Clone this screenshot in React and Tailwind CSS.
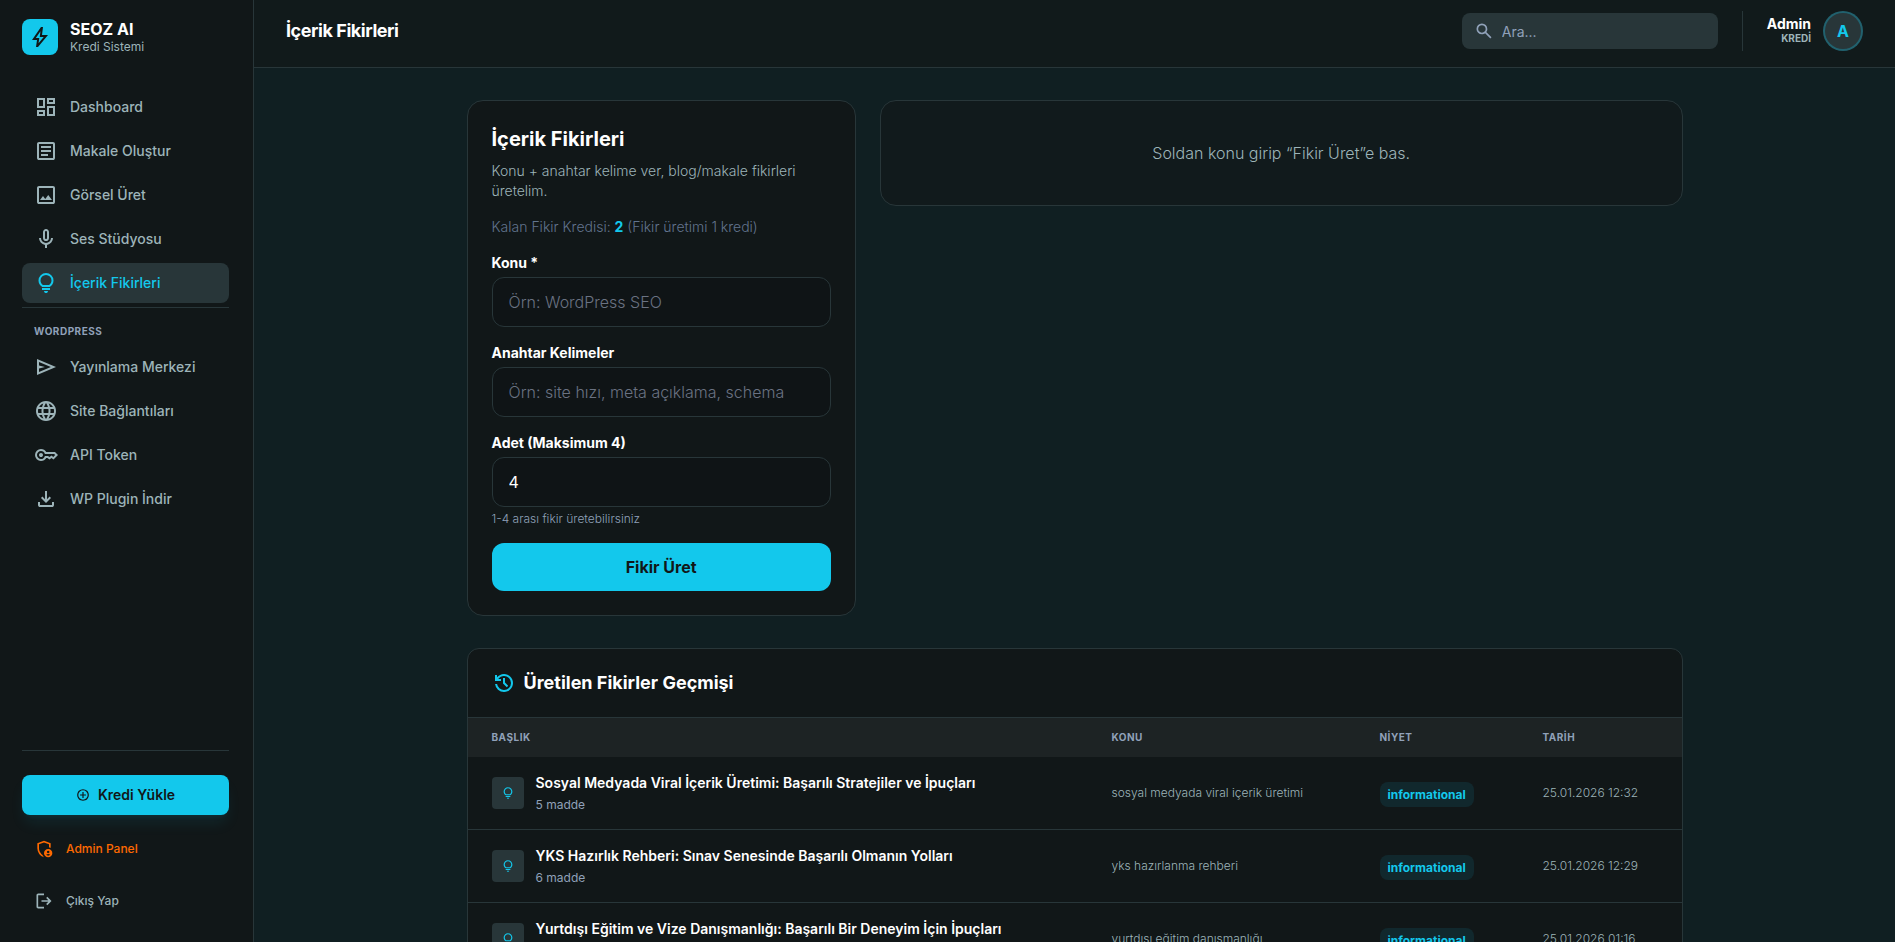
const icons = {
  bolt: "m422-232 207-248H469l29-227-185 267h139l-30 208ZM320-80l40-280H160l360-520h80l-40 320h240L400-80h-80Zm151-390Z",
  dashboard: "M520-600v-240h320v240H520ZM120-440v-400h320v400H120Zm400 320v-400h320v400H520Zm-400 0v-240h320v240H120Zm80-400h160v-240H200v240Zm400 320h160v-240H600v240Zm0-480h160v-80H600v80ZM200-200h160v-80H200v80Z",
  article: "M280-280h280v-80H280v80Zm0-160h400v-80H280v80Zm0-160h400v-80H280v80Zm-80 480q-33 0-56.5-23.5T120-200v-560q0-33 23.5-56.5T200-840h560q33 0 56.5 23.5T840-760v560q0 33-23.5 56.5T760-120H200Zm0-80h560v-560H200v560Z",
  image: "M200-120q-33 0-56.5-23.5T120-200v-560q0-33 23.5-56.5T200-840h560q33 0 56.5 23.5T840-760v560q0 33-23.5 56.5T760-120H200Zm0-80h560v-560H200v560Zm40-80h480L570-480 450-320l-90-120-120 160Z",
  mic: "M480-400q-50 0-85-35t-35-85v-240q0-50 35-85t85-35q50 0 85 35t35 85v240q0 50-35 85t-85 35Zm0-240Zm-40 520v-123q-104-14-172-93t-68-184h80q0 83 58.5 141.5T480-320q83 0 141.5-58.5T680-520h80q0 105-68 184t-172 93v123h-80Zm40-360q17 0 28.5-11.5T520-520v-240q0-17-11.5-28.5T480-800q-17 0-28.5 11.5T440-760v240q0 17 11.5 28.5T480-480Z",
  lightbulb: "M480-80q-33 0-56.5-23.5T400-160h160q0 33-23.5 56.5T480-80ZM320-200v-80h320v80H320Zm10-120q-69-41-109.5-110T180-580q0-125 87.5-212.5T480-880q125 0 212.5 87.5T780-580q0 81-40.5 150T630-320H330Zm24-80h252q45-32 69.5-79T700-580q0-92-64-156t-156-64q-92 0-156 64t-64 156q0 54 24.5 101t69.5 79Zm126 0Z",
  send: "M120-160v-640l760 320-760 320Zm80-120 474-200-474-200v140l240 60-240 60v140Zm0 0v-400 400Z",
  language: "M480-80q-82 0-155-31.5t-127.5-86Q143-252 111.5-325T80-480q0-83 31.5-155.5t86-127Q252-817 325-848.5T480-880q83 0 155.5 31.5t127 86q54.5 54.5 86 127T880-480q0 82-31.5 155t-86 127.5q-54.5 54.5-127 86T480-80Zm0-82q26-36 45-75t31-83H404q12 44 31 83t45 75Zm-104-16q-18-33-31.5-68.5T322-320H204q29 50 72.5 87t99.5 55Zm208 0q56-18 99.5-55t72.5-87H638q-9 38-22.5 73.5T584-178ZM170-400h136q-3-20-4.5-39.5T300-480q0-21 1.5-40.5T306-560H170q-5 20-7.5 39.5T160-480q0 21 2.5 40.5T170-400Zm216 0h188q3-20 4.5-39.5T580-480q0-21-1.5-40.5T574-560H386q-3 20-4.5 39.5T380-480q0 21 1.5 40.5T386-400Zm268 0h136q5-20 7.5-39.5T800-480q0-21-2.5-40.5T790-560H654q3 20 4.5 39.5T660-480q0 21-1.5 40.5T654-400Zm-16-240h118q-29-50-72.5-87T584-782q18 33 31.5 68.5T638-640Zm-234 0h152q-12-44-31-83t-45-75q-26 36-45 75t-31 83Zm-200 0h118q9-38 22.5-73.5T376-782q-56 18-99.5 55T204-640Z",
  key: "M280-400q-33 0-56.5-23.5T200-480q0-33 23.5-56.5T280-560q33 0 56.5 23.5T360-480q0 33-23.5 56.5T280-400Zm0 160q-100 0-170-70T40-480q0-100 70-170t170-70q67 0 121.5 33t86.5 87h352l120 120-180 180-80-60-80 60-85-60h-47q-32 54-86.5 87T280-240Zm0-80q56 0 98.5-34t56.5-86h125l58 41 82-61 71 55 75-75-40-40H435q-14-52-56.5-86T280-640q-66 0-113 47t-47 113q0 66 47 113t113 47Z",
  download: "M480-320 280-520l56-58 104 104v-326h80v326l104-104 56 58-200 200ZM240-160q-33 0-56.5-23.5T160-240v-120h80v120h480v-120h80v120q0 33-23.5 56.5T720-160H240Z",
  addCircle: "M440-280h80v-160h160v-80H520v-160h-80v160H280v80h160v160Zm40 200q-83 0-156-31.5T197-197q-54-54-85.5-127T80-480q0-83 31.5-156T197-763q54-54 127-85.5T480-880q83 0 156 31.5T763-763q54 54 85.5 127T880-480q0 83-31.5 156T763-197q-54 54-127 85.5T480-80Zm0-80q134 0 227-93t93-227q0-134-93-227t-227-93q-134 0-227 93t-93 227q0 134 93 227t227 93Z",
  adminPanel: "M680-280q25 0 42.5-17.5T740-340q0-25-17.5-42.5T680-400q-25 0-42.5 17.5T620-340q0 25 17.5 42.5T680-280Zm0 120q31 0 57-14.5t42-38.5q-22-13-47-20t-52-7q-27 0-52 7t-47 20q16 24 42 38.5t57 14.5ZM480-80q-139-35-229.5-159.5T160-516v-244l320-120 320 120v227q-19-8-39-14.5t-41-9.5v-147l-240-90-240 90v188q0 47 12.5 94t35 89.5Q310-290 342-254t71 60q11 32 29 61t41 52q-1 0-1.5.5t-1.5.5Zm200 0q-83 0-141.5-58.5T480-280q0-83 58.5-141.5T680-480q83 0 141.5 58.5T880-280q0 83-58.5 141.5T680-80ZM480-494Z",
  logout: "M200-120q-33 0-56.5-23.5T120-200v-560q0-33 23.5-56.5T200-840h280v80H200v560h280v80H200Zm440-160-55-58 102-102H360v-80h327L585-622l55-58 200 200-200 200Z",
  search: "M784-120 532-372q-30 24-69 38t-83 14q-109 0-184.5-75.5T120-580q0-109 75.5-184.5T380-840q109 0 184.5 75.5T640-580q0 44-14 83t-38 69l252 252-56 56ZM380-400q75 0 127.5-52.5T560-580q0-75-52.5-127.5T380-760q-75 0-127.5 52.5T200-580q0 75 52.5 127.5T380-400Z",
  history: "M480-120q-138 0-240.5-91.5T122-440h82q14 104 92.5 172T480-200q117 0 198.5-81.5T760-480q0-117-81.5-198.5T480-760q-69 0-129 32t-101 88h110v80H120v-240h80v94q51-64 124.5-99T480-840q75 0 140.5 28.5t114 77q48.5 48.5 77 114T840-480q0 75-28.5 140.5t-77 114q-48.5 48.5-114 77T480-120Zm112-192L440-464v-216h80v184l128 128-56 56Z",
};

function Icon({ name, className }) {
  return (
    <svg viewBox="0 -960 960 960" fill="currentColor" aria-hidden="true" className={`shrink-0 ${className}`}>
      <path d={icons[name]} />
    </svg>
  );
}

function NavItem({ icon, label, active }) {
  return (
    <a
      href="#"
      className={`flex h-10 items-center gap-3 rounded-lg px-3 text-sm font-medium ${
        active ? "bg-[#283639] text-[#13c8ec]" : "text-[#9db4b9] hover:bg-[#283639]"
      }`}
    >
      <Icon name={icon} className="size-6" />
      {label}
    </a>
  );
}

function Sidebar() {
  const mainLinks = [
    { icon: "dashboard", label: "Dashboard" },
    { icon: "article", label: "Makale Oluştur" },
    { icon: "image", label: "Görsel Üret" },
    { icon: "mic", label: "Ses Stüdyosu" },
    { icon: "lightbulb", label: "İçerik Fikirleri", active: true },
  ];
  const wordpressLinks = [
    { icon: "send", label: "Yayınlama Merkezi" },
    { icon: "language", label: "Site Bağlantıları" },
    { icon: "key", label: "API Token" },
    { icon: "download", label: "WP Plugin İndir" },
  ];

  return (
    <aside className="flex w-[254px] shrink-0 flex-col justify-between border-r border-[#283639] bg-[#111718] py-[19px] pr-6 pl-[22px]">
      <div className="flex flex-col gap-8">
        <div className="flex h-9 items-center gap-3">
          <div className="flex size-9 items-center justify-center rounded-lg bg-[#13c8ec] text-[#111718]">
            <Icon name="bolt" className="size-6" />
          </div>
          <div>
            <div className="text-base leading-5 font-bold text-white">SEOZ AI</div>
            <div className="text-xs text-[#9db4b9]">Kredi Sistemi</div>
          </div>
        </div>

        <nav className="flex flex-col gap-1">
          {mainLinks.map((link) => (
            <NavItem key={link.label} {...link} />
          ))}
          <div className="border-t border-[#283639] px-3 pt-4 pb-1 text-[10px] leading-[15px] font-bold tracking-wider text-slate-400">
            WORDPRESS
          </div>
          {wordpressLinks.map((link) => (
            <NavItem key={link.label} {...link} />
          ))}
        </nav>
      </div>

      <div className="flex flex-col border-t border-[#283639] pt-6">
        <button
          type="button"
          className="mb-3 flex h-10 items-center justify-center gap-2 rounded-lg bg-[#13c8ec] text-sm font-semibold text-[#111718] shadow-lg shadow-[#13c8ec]/10"
        >
          <Icon name="addCircle" className="size-3.5" />
          Kredi Yükle
        </button>
        <a href="#" className="mb-2 flex items-center gap-3 px-3 py-3 text-xs font-medium text-orange-500">
          <Icon name="adminPanel" className="size-5" />
          Admin Panel
        </a>
        <a href="#" className="flex items-center gap-3 px-3 py-3 text-xs font-medium text-[#9db4b9]">
          <Icon name="logout" className="size-5" />
          Çıkış Yap
        </a>
      </div>
    </aside>
  );
}

function Header() {
  return (
    <header className="flex h-[68px] shrink-0 items-center justify-between border-b border-[#283639] bg-[#111a1b] px-8 pb-[5px]">
      <h2 className="text-lg font-bold tracking-tight text-white">İçerik Fikirleri</h2>
      <div className="flex items-center gap-6">
        <div className="relative w-64">
          <Icon name="search" className="absolute top-2 left-3 size-5 text-slate-400" />
          <input
            type="search"
            aria-label="Ara"
            placeholder="Ara..."
            className="block h-9 w-full rounded-lg bg-[#283639] pr-4 pl-10 text-sm text-white outline-none placeholder:text-slate-400"
          />
        </div>
        <div className="flex h-10 items-center gap-3 border-l border-[#283639] pl-6">
          <div className="pb-0.5 text-right">
            <div className="text-sm leading-4 font-bold text-white">Admin</div>
            <div className="text-[10px] leading-3 font-bold text-[#9db4b9]">KREDİ</div>
          </div>
          <div className="flex size-10 items-center justify-center rounded-full border-2 border-[#13c8ec]/30 bg-[#283639] text-base font-bold text-[#13c8ec]">
            A
          </div>
        </div>
      </div>
    </header>
  );
}

function Field({ id, label, hint, ...props }) {
  return (
    <div>
      <label htmlFor={id} className="block text-sm font-bold text-white">
        {label}
      </label>
      <input
        id={id}
        className="mt-1 block w-full rounded-xl border border-[#283639] bg-[#0f1416] px-4 py-3 text-base text-white outline-none placeholder:font-light placeholder:text-gray-500"
        {...props}
      />
      {hint && <p className="mt-1 text-xs font-light text-slate-400">{hint}</p>}
    </div>
  );
}

function IdeaForm() {
  return (
    <div className="rounded-2xl border border-[#283639] bg-[#111718] p-6">
      <h1 className="text-xl font-bold text-white">İçerik Fikirleri</h1>
      <p className="mt-2 text-sm font-light text-[#9db4b9]">
        Konu + anahtar kelime ver, blog/makale fikirleri üretelim.
      </p>
      <p className="mt-4 text-sm font-light text-slate-500">
        Kalan Fikir Kredisi: <b className="font-bold text-[#13c8ec]">2</b> (Fikir üretimi 1 kredi)
      </p>
      <form className="mt-4 flex flex-col gap-4">
        <Field id="topic" label="Konu *" type="text" placeholder="Örn: WordPress SEO" />
        <Field id="keywords" label="Anahtar Kelimeler" type="text" placeholder="Örn: site hızı, meta açıklama, schema" />
        <Field id="count" label="Adet (Maksimum 4)" type="number" min="1" max="4" defaultValue="4" hint="1-4 arası fikir üretebilirsiniz" />
        <button type="button" className="h-12 rounded-xl bg-[#13c8ec] text-base font-bold text-[#111718]">
          Fikir Üret
        </button>
      </form>
    </div>
  );
}

function History() {
  const ideas = [
    {
      title: "Sosyal Medyada Viral İçerik Üretimi: Başarılı Stratejiler ve İpuçları",
      items: 5,
      topic: "sosyal medyada viral içerik üretimi",
      date: "25.01.2026 12:32",
    },
    {
      title: "YKS Hazırlık Rehberi: Sınav Senesinde Başarılı Olmanın Yolları",
      items: 6,
      topic: "yks hazırlanma rehberi",
      date: "25.01.2026 12:29",
    },
    {
      title: "Yurtdışı Eğitim ve Vize Danışmanlığı: Başarılı Bir Deneyim İçin İpuçları",
      items: 6,
      topic: "yurtdışı eğitim danışmanlığı",
      date: "25.01.2026 01:16",
    },
  ];

  return (
    <section className="mt-8 overflow-hidden rounded-xl border border-[#283639] bg-[#111718]">
      <div className="flex items-center gap-2 border-b border-[#283639] px-6 py-5">
        <Icon name="history" className="size-6 text-[#13c8ec]" />
        <h3 className="text-lg font-bold text-white">Üretilen Fikirler Geçmişi</h3>
      </div>
      <table className="w-full table-fixed text-left">
        <thead className="bg-white/5">
          <tr className="text-[10px] leading-[15px] tracking-wider text-slate-400">
            <th className="px-6 py-3 font-bold">BAŞLIK</th>
            <th className="w-[268px] px-6 py-3 font-bold">KONU</th>
            <th className="w-[163px] px-6 py-3 font-bold">NİYET</th>
            <th className="w-[163px] px-6 py-3 font-bold">TARİH</th>
          </tr>
        </thead>
        <tbody className="divide-y divide-[#283639]">
          {ideas.map((idea) => (
            <tr key={idea.title}>
              <td className="px-6 py-4">
                <div className="flex items-center gap-3">
                  <div className="flex size-8 shrink-0 items-center justify-center rounded bg-[#283639] text-[#13c8ec]">
                    <Icon name="lightbulb" className="size-3.5" />
                  </div>
                  <div className="min-w-0">
                    <p className="text-sm font-semibold text-white">{idea.title}</p>
                    <p className="mt-1 text-xs text-slate-400">{idea.items} madde</p>
                  </div>
                </div>
              </td>
              <td className="px-6 py-4 text-xs font-light text-[#9db4b9]">{idea.topic}</td>
              <td className="px-6 pt-[18px] pb-4">
                <span className="inline-block rounded-lg bg-[#13c8ec]/10 px-2 py-1 text-xs leading-[17px] font-bold text-[#13c8ec]">
                  informational
                </span>
              </td>
              <td className="px-6 py-4 text-xs font-light whitespace-nowrap text-[#9db4b9]">{idea.date}</td>
            </tr>
          ))}
        </tbody>
      </table>
    </section>
  );
}

export default function App() {
  return (
    <div className="flex h-screen overflow-hidden bg-[#101f22] font-['Inter',sans-serif]">
      <Sidebar />
      <div className="flex min-w-0 flex-1 flex-col">
        <Header />
        <main className="flex-1 overflow-y-auto [scrollbar-width:none]">
          <div className="mx-auto max-w-7xl p-8">
            <div className="grid grid-cols-1 items-start gap-6 lg:grid-cols-3">
              <IdeaForm />
              <div className="rounded-2xl border border-[#283639] bg-[#111a1c] p-10 text-center text-base font-light text-[#9db4b9] lg:col-span-2">
                Soldan konu girip “Fikir Üret”e bas.
              </div>
            </div>
            <History />
          </div>
        </main>
      </div>
    </div>
  );
}
